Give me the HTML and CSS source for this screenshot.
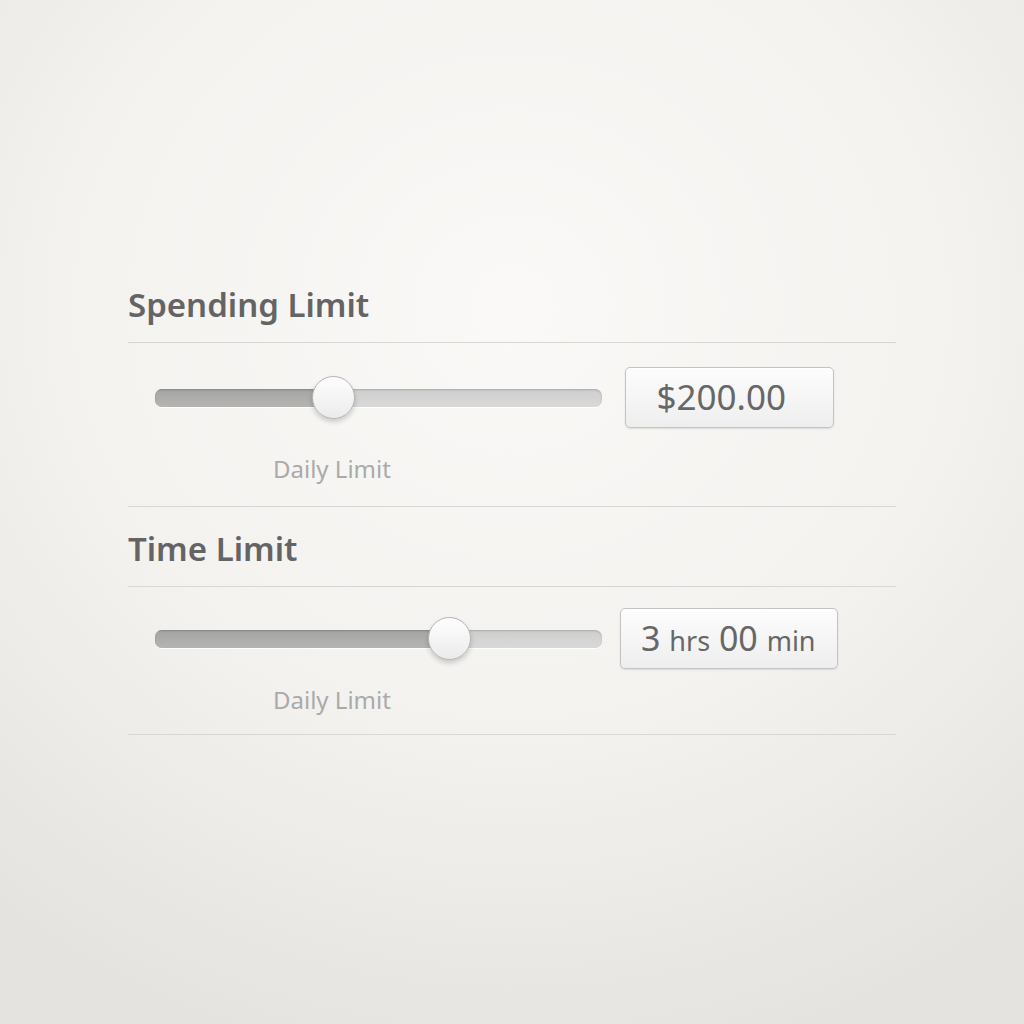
FILE: index.html
```html
<!DOCTYPE html>
<html lang="en">
<head>
  <meta charset="UTF-8">
  <meta name="viewport" content="width=device-width, initial-scale=1.0">
  <title>Limits</title>
  <link rel="stylesheet" href="styles.css">
</head>
<body>

<div class="panel">

  <!-- Spending limit -->
  <section class="limit">
    <h2 class="limit-title">Spending Limit</h2>
    <div class="limit-row">
      <div class="slider">
        <div class="slider-track">
          <div class="slider-fill" style="width: 40%"></div>
        </div>
        <div class="slider-thumb" style="left: 40%"></div>
      </div>
      <div class="value-cell">
        <div class="value-box">$200.00</div>
      </div>
    </div>
    <div class="limit-caption">Daily Limit</div>
  </section>

  <!-- Time limit -->
  <section class="limit limit-tight">
    <h2 class="limit-title">Time Limit</h2>
    <div class="limit-row">
      <div class="slider">
        <div class="slider-track">
          <div class="slider-fill" style="width: 66%"></div>
        </div>
        <div class="slider-thumb" style="left: 66%"></div>
      </div>
      <div class="value-cell">
        <div class="value-box value-box-wide">3 <span class="unit">hrs</span> 00 <span class="unit">min</span></div>
      </div>
    </div>
    <div class="limit-caption">Daily Limit</div>
  </section>

</div>

</body>
</html>
```

FILE: styles.css
```css
html, body {
  height: 100%;
}

body {
  margin: 0;
  font-family: 'Noto Sans', 'Open Sans', sans-serif;
  color: #656565;
  background: radial-gradient(ellipse 80% 75% at 50% 30%, #faf9f7 0%, #f4f2ef 55%, #e5e3df 100%);
}

.panel {
  width: 768px;
  margin: 0 auto;
  padding-top: 287px;
}

/* One block: heading, slider row, caption, closing rule */
.limit {
  border-bottom: 1px solid #d9d7d3;
  padding-bottom: 22px;
}

.limit + .limit {
  margin-top: 24px;
}

.limit-title {
  margin: 0;
  font-size: 33px;
  line-height: 36px;
  font-weight: 600;
  color: #646464;
  padding-bottom: 19px;
  border-bottom: 1px solid #d9d7d3;
}

.limit-row {
  display: flex;
  align-items: center;
  height: 61px;
  margin-top: 24px;
}

.limit-caption {
  margin-top: 26px;
  padding-left: 145px;
  font-size: 24px;
  line-height: 30px;
  color: #aaaaaa;
}

.limit-tight {
  padding-bottom: 19px;
}

.limit-tight .limit-row {
  margin-top: 21px;
}

.limit-tight .limit-caption {
  margin-top: 16px;
}

/* Slider */
.slider {
  position: relative;
  width: 447px;
  height: 43px;
  margin-left: 27px;
  display: flex;
  align-items: center;
}

.slider-track {
  width: 100%;
  height: 18px;
  border-radius: 7px;
  overflow: hidden;
  background: linear-gradient(to bottom, #cecece, #d9d9d8);
  box-shadow: inset 0 1px 2px rgba(0, 0, 0, 0.18), 0 1px 0 rgba(255, 255, 255, 0.9);
}

.slider-fill {
  height: 100%;
  background: linear-gradient(to bottom, #a4a4a3, #b5b5b4);
  box-shadow: inset 0 1px 2px rgba(0, 0, 0, 0.2);
}

.slider-thumb {
  position: absolute;
  top: 0;
  width: 43px;
  height: 43px;
  margin-left: -22px;
  border-radius: 50%;
  box-sizing: border-box;
  border: 1px solid #b3b3b3;
  background: linear-gradient(to bottom, #fefefe, #ebebeb);
  box-shadow: 0 3px 5px rgba(0, 0, 0, 0.18), inset 0 1px 0 #ffffff;
}

/* Value display */
.value-cell {
  width: 254px;
  display: flex;
  justify-content: center;
}

.value-box {
  width: 209px;
  height: 61px;
  box-sizing: border-box;
  padding-left: 31px;
  border: 1px solid #c3c3c3;
  border-radius: 5px;
  background: linear-gradient(to bottom, #fdfdfd, #eeeeee);
  box-shadow: 0 1px 2px rgba(0, 0, 0, 0.1), inset 0 1px 0 #ffffff;
  font-size: 35px;
  line-height: 58px;
  color: #676767;
  white-space: nowrap;
}

.value-box-wide {
  width: 218px;
  padding-left: 20px;
  font-size: 34px;
}

.unit {
  font-size: 27px;
}
```
